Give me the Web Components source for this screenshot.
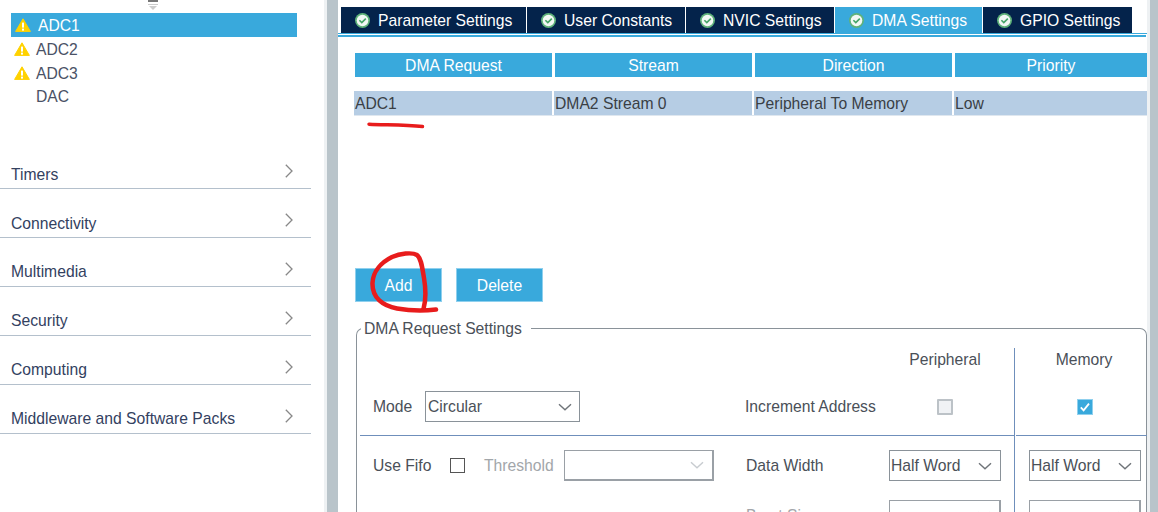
<!DOCTYPE html>
<html>
<head>
<meta charset="utf-8">
<title>DMA Settings</title>
<style>
  html, body { margin: 0; height: 100%; }
  body {
    width: 1158px;
    height: 512px;
    overflow: hidden;
    position: relative;
    font-family: "Liberation Sans", Arial, sans-serif;
    background: #fff;
  }
  mx-app { width: 1158px; height: 512px; }
</style>
</head>
<body>
<mx-app></mx-app>

<template id="warn-tpl">
  <svg width="16" height="14" viewBox="0 0 16 14"><path d="M8 .8 15.4 13.4H.6Z" fill="#ffd200" stroke="#ffd200" stroke-width="1" stroke-linejoin="round"/><rect x="7" y="4.6" width="2" height="5" fill="#fff"/><rect x="7" y="10.6" width="2" height="2" fill="#fff"/></svg>
</template>

<script>
const ui = "'Liberation Sans', Arial, sans-serif";

class TreeItem extends HTMLElement {
  connectedCallback() {
    const warn = this.hasAttribute("warn");
    this.attachShadow({ mode: "open" }).innerHTML = `
      <style>
        :host { display: flex; align-items: center; height: 24px; width: 286px; margin-left: 11px;
          font-size: 15.7px; color: #4a5266; box-sizing: border-box; padding-left: 3px; }
        :host([selected]) { background: #39a9dc; color: #fff; padding-left: 4px; }
        .ic { width: 22px; height: 14px; display: flex; flex: none; }
        :host([selected]) .ic { width: 23px; }
        .t { padding-top: 1px; }
        :host(:not([warn])) .t { padding-top: 0; }
      </style>
      <span class="ic">${warn ? document.getElementById("warn-tpl").innerHTML : ""}</span>
      <span class="t"><slot></slot></span>`;
  }
}
customElements.define("tree-item", TreeItem);

class CategoryRow extends HTMLElement {
  connectedCallback() {
    this.attachShadow({ mode: "open" }).innerHTML = `
      <style>
        :host { display: flex; align-items: flex-end; justify-content: space-between; box-sizing: border-box;
          width: 311px; height: 49px; padding: 0 18px 0 11px; border-bottom: 1px solid #b4c0cc;
          font-size: 15.7px; color: #33415f; }
        .t { line-height: 18px; padding-bottom: 5px; }
        :host([low]) .t { padding-bottom: 4px; }
        svg { margin-bottom: 10px; }
      </style>
      <span class="t"><slot></slot></span>
      <svg width="8" height="14" viewBox="0 0 8 14"><path d="M.8.8 7 7 .8 13.2" fill="none" stroke="#888" stroke-width="1.3"/></svg>`;
  }
}
customElements.define("category-row", CategoryRow);

class SideBar extends HTMLElement {
  connectedCallback() {
    this.attachShadow({ mode: "open" }).innerHTML = `
      <style>
        :host { display: block; width: 324px; flex: none; background: #fff; }
        .scroll { display: block; margin-left: 148px; height: 13px; }
        .cats { display: block; margin-top: 31px; }
      </style>
      <svg class="scroll" width="10" height="13" viewBox="0 0 10 13">
        <rect x="0" y="0" width="10" height="2" fill="#777"/>
        <rect x="0" y="4" width="10" height="1" fill="#ccc"/>
        <path d="M1 6h8L5 10Z" fill="#ccc"/>
      </svg>
      <tree-item warn selected>ADC1</tree-item>
      <tree-item warn>ADC2</tree-item>
      <tree-item warn>ADC3</tree-item>
      <tree-item>DAC</tree-item>
      <div class="cats">
        <category-row low>Timers</category-row>
        <category-row low>Connectivity</category-row>
        <category-row>Multimedia</category-row>
        <category-row>Security</category-row>
        <category-row>Computing</category-row>
        <category-row>Middleware and Software Packs</category-row>
      </div>`;
  }
}
customElements.define("side-bar", SideBar);

class TabItem extends HTMLElement {
  connectedCallback() {
    this.attachShadow({ mode: "open" }).innerHTML = `
      <style>
        :host { display: flex; align-items: center; box-sizing: border-box; height: 26px; background: #04234b;
          color: #fff; font-size: 15.7px; padding-left: 14px; flex: none; }
        :host([active]) { background: #39a9dc; }
        svg { margin-right: 8px; flex: none; }
        .t { padding-top: 1px; }
      </style>
      <svg width="15" height="15" viewBox="0 0 15 15"><circle cx="7.5" cy="7.5" r="7.5" fill="#5fb27a"/><circle cx="7.5" cy="7.5" r="5.8" fill="#f2f8f4"/><path d="M4.4 7.2 6.8 9.6 10.8 5.6" fill="none" stroke="#45a566" stroke-width="1.6"/></svg>
      <span class="t"><slot></slot></span>`;
  }
}
customElements.define("tab-item", TabItem);

class TabBar extends HTMLElement {
  connectedCallback() {
    this.attachShadow({ mode: "open" }).innerHTML = `
      <style>
        :host { display: block; padding-top: 7px; }
        .tabs { display: flex; gap: 1px; padding-left: 3px; }
        .rule { height: 1px; background: #39a9dc; }
        .rule2 { height: 2px; margin-top: 1px; background: #39a9dc; margin-right: 1px; }
      </style>
      <div class="tabs"><slot></slot></div>
      <div class="rule"></div>
      <div class="rule2"></div>`;
  }
}
customElements.define("tab-bar", TabBar);

class DmaTable extends HTMLElement {
  connectedCallback() {
    this.attachShadow({ mode: "open" }).innerHTML = `
      <style>
        :host { display: block; font-size: 15.7px; }
        .head { display: grid; grid-template-columns: 197px 197px 197px 192px; column-gap: 3px; margin: 16px 0 0 17px; }
        .head div { background: #39a9dc; color: #fff; height: 24px; line-height: 26px; text-align: center; }
        .row { display: grid; grid-template-columns: 198px 198px 198px 193px; column-gap: 2px; margin: 14px 0 0 16px; border-bottom: 1px solid #dfe7ef; }
        .row div { background: #b6cde4; color: #3a3f45; height: 24px; line-height: 26px; padding-left: 1px; box-sizing: border-box; }
      </style>
      <div class="head"><div>DMA Request</div><div>Stream</div><div>Direction</div><div>Priority</div></div>
      <div class="row"><div>ADC1</div><div>DMA2 Stream 0</div><div>Peripheral To Memory</div><div>Low</div></div>`;
  }
}
customElements.define("dma-table", DmaTable);

class ActionButton extends HTMLElement {
  connectedCallback() {
    this.attachShadow({ mode: "open" }).innerHTML = `
      <style>
        :host { display: flex; align-items: center; justify-content: center; box-sizing: border-box; width: 87px; height: 34px;
          padding-top: 1px; background: #39a9dc; border: 1px solid #8fd0ee; color: #fff; font-size: 15.7px; }
      </style><slot></slot>`;
  }
}
customElements.define("action-button", ActionButton);

class SelectBox extends HTMLElement {
  connectedCallback() {
    this.attachShadow({ mode: "open" }).innerHTML = `
      <style>
        :host { display: flex; align-items: center; box-sizing: border-box; height: 31px;
          border: 1px solid #8a9299; background: #fff; font-size: 15.7px; color: #4a5058; padding: 0 8px 0 1px; }
        :host([wide]) { padding: 0 7px 0 2px; }
        :host([disabled]) { border-color: #9aa0a6; border-right-width: 2px; border-bottom-width: 2px; }
        :host([disabled]) svg { stroke: #c8ccd0; }
        svg { stroke: #6f7479; fill: none; stroke-width: 1.4; flex: none; margin-left: auto; }
      </style>
      <slot></slot>
      <svg width="14" height="8" viewBox="0 0 14 8"><path d="M1 1.2 7 6.8 13 1.2"/></svg>`;
  }
}
customElements.define("select-box", SelectBox);

class CheckBox extends HTMLElement {
  connectedCallback() {
    this.attachShadow({ mode: "open" }).innerHTML = `
      <style>
        :host { display: block; box-sizing: border-box; width: 15px; height: 15px; border: 1.5px solid #555; background: #fff; }
        :host([muted]) { width: 16px; height: 16px; border: 2px solid #bcc2c7; background: #f0f2f5; border-radius: 1px; }
        :host([checked]) { width: 16px; height: 16px; border: 1px solid #8fd0ee; background: #39a9dc; }
        svg { display: none; }
        :host([checked]) svg { display: block; }
      </style>
      <svg width="14" height="14" viewBox="0 0 14 14"><path d="M2.8 7.4 5.6 10.4 11 3.6" fill="none" stroke="#fff" stroke-width="1.8"/></svg>`;
  }
}
customElements.define("check-box", CheckBox);

class RequestSettings extends HTMLElement {
  connectedCallback() {
    this.attachShadow({ mode: "open" }).innerHTML = `
      <style>
        :host { display: block; margin: 16px 0 0 18px; font-size: 15.7px; color: #4a5058; }
        fieldset { margin: 0; padding: 0; height: 240px; box-sizing: border-box; border: 1px solid #8a9299; border-bottom: 0; border-radius: 7px 7px 0 0; min-width: 0; }
        legend { margin-left: 4px; padding: 2px 9px 0 3px; line-height: 18px; color: #4a5058; }
        .grid { display: grid; grid-template-columns: 16px 372px 144px 125px 1px 132px; grid-template-rows: 25px 62px 1px 64px 40px; margin: 10px 0 0 0; }
        .lbl { display: flex; align-items: center; white-space: nowrap; }
        .mode { grid-column: 2; grid-row: 2; display: flex; align-items: center; align-self: end; height: 31px; margin-bottom: 13px; }
        .mode span { width: 52px; flex: none; }
        .mode select-box { width: 155px; }
        .hdr { display: flex; align-items: center; justify-content: center; padding-bottom: 1px; }
        .hdr.p { grid-column: 4; grid-row: 1; padding-right: 13px; }
        .hdr.m { grid-column: 6; grid-row: 1; padding-left: 6px; }
        .inc { grid-column: 3; grid-row: 2; align-self: end; height: 31px; margin-bottom: 13px; }
        .c1 { grid-column: 4; grid-row: 2; display: flex; align-items: center; justify-content: center; align-self: end; height: 31px; margin-bottom: 13px; padding-right: 13px; box-sizing: border-box; }
        .c2 { grid-column: 6; grid-row: 2; display: flex; align-items: center; justify-content: center; align-self: end; height: 31px; margin-bottom: 13px; padding-left: 7px; box-sizing: border-box; }
        .hr { grid-column: 1 / -1; grid-row: 3; background: #6f8fbb; margin-left: 3px; }
        .v { grid-column: 5; grid-row: 1 / -1; background: #6f8fbb; z-index: 1; box-shadow: 1px 0 0 #fff; }
        .fifo { grid-column: 2; grid-row: 4; display: flex; align-items: center; height: 31px; margin-top: 14px; }
        .fifo .uf { width: 77px; flex: none; }
        .fifo check-box { margin-right: 19px; }
        .fifo .th { color: #a2a6aa; width: 80px; flex: none; }
        .fifo select-box { width: 150px; }
        .dw { grid-column: 3; grid-row: 4; height: 31px; margin: 14px 0 0 1px; }
        .s1 { grid-column: 4; grid-row: 4; width: 112px; margin-top: 14px; }
        .s2 { grid-column: 6; grid-row: 4; width: 112px; margin: 14px 0 0 14px; }
        .bs { grid-column: 3; grid-row: 5; color: #a2a6aa; height: 31px; margin-left: 1px; }
        .s3 { grid-column: 4; grid-row: 5; width: 112px; }
        .s4 { grid-column: 6; grid-row: 5; width: 112px; margin-left: 14px; }
      </style>
      <fieldset>
        <legend>DMA Request Settings</legend>
        <div class="grid">
          <div class="hdr p">Peripheral</div>
          <div class="hdr m">Memory</div>
          <div class="mode"><span>Mode</span><select-box wide>Circular</select-box></div>
          <div class="lbl inc">Increment Address</div>
          <div class="c1"><check-box muted></check-box></div>
          <div class="c2"><check-box checked></check-box></div>
          <div class="hr"></div>
          <div class="v"></div>
          <div class="fifo"><span class="uf">Use Fifo</span><check-box></check-box><span class="th">Threshold</span><select-box disabled></select-box></div>
          <div class="lbl dw">Data Width</div>
          <select-box class="s1">Half Word</select-box>
          <select-box class="s2">Half Word</select-box>
          <div class="lbl bs">Burst Size</div>
          <select-box class="s3" disabled></select-box>
          <select-box class="s4" disabled></select-box>
        </div>
      </fieldset>`;
  }
}
customElements.define("request-settings", RequestSettings);

class MxApp extends HTMLElement {
  connectedCallback() {
    this.attachShadow({ mode: "open" }).innerHTML = `
      <style>
        :host { display: flex; overflow: hidden; font-family: ${ui}; }
        .light { width: 3px; background: #eef1f3; flex: none; }
        .gray { width: 11px; background: #b9c4ca; flex: none; }
        .gray.r { width: 8px; }
        main { width: 809px; flex: none; background: #fff; position: relative; }
        .btns { display: flex; gap: 14px; margin: 152px 0 0 17px; }
        .ink { position: absolute; left: 0; top: 0; pointer-events: none; overflow: visible; }
      </style>
      <side-bar></side-bar>
      <div class="light"></div>
      <div class="gray"></div>
      <main>
        <tab-bar>
          <tab-item style="width:185px">Parameter Settings</tab-item>
          <tab-item style="width:158px">User Constants</tab-item>
          <tab-item style="width:148px">NVIC Settings</tab-item>
          <tab-item active style="width:147px">DMA Settings</tab-item>
          <tab-item style="width:149px">GPIO Settings</tab-item>
        </tab-bar>
        <dma-table></dma-table>
        <div class="btns"><action-button>Add</action-button><action-button>Delete</action-button></div>
        <request-settings></request-settings>
        <svg class="ink" width="809" height="512" viewBox="338 0 809 512" fill="none" stroke="#e81c1c" stroke-linecap="round" stroke-linejoin="round">
          <path d="M369 124.2C385 125 405 124.5 422.5 126.5" stroke-width="3.5"/>
          <path d="M436 309.5C425 311 408 310.5 397 308.5C383 306 372 298 372.5 283C373 271 382 262 392 257C400 253.5 412 252 417 255C421 258 422 266 424 278C426 290 426 300 423.5 309" stroke-width="4.5"/>
        </svg>
      </main>
      <div class="light"></div>
      <div class="gray r"></div>`;
  }
}
customElements.define("mx-app", MxApp);
</script>
</body>
</html>
